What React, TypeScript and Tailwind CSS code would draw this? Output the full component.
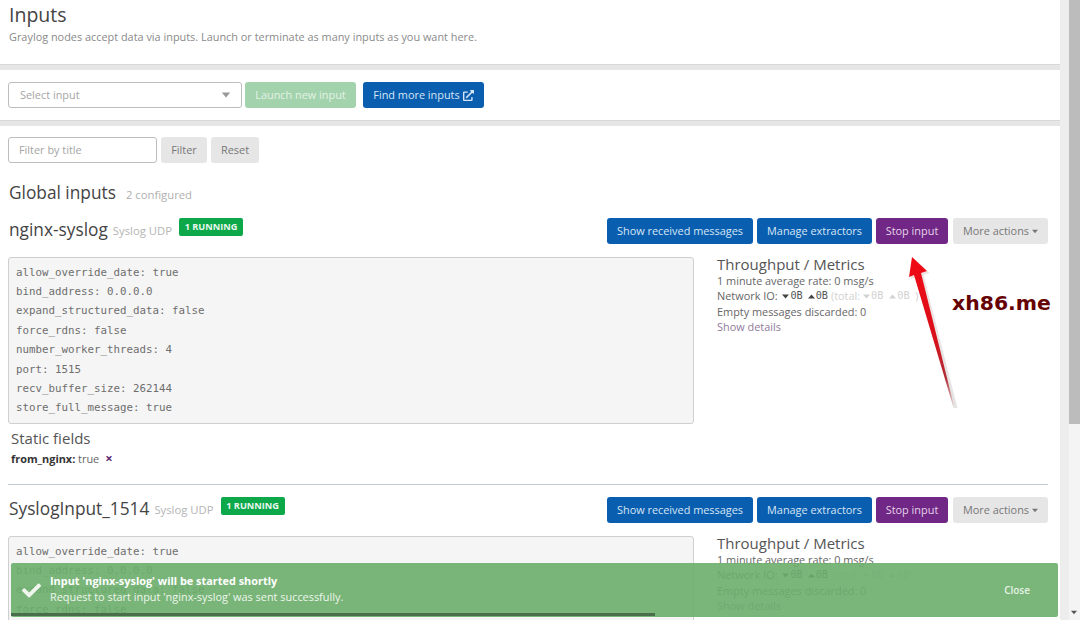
import React from "react";
import { FaCheck, FaExternalLinkAlt } from "react-icons/fa";

const sans = "font-['Open_Sans',sans-serif]";

function Caret({ up, className = "" }: { up?: boolean; className?: string }) {
  return (
    <svg width="7" height="5" viewBox="0 0 7 5" className={`inline-block ${className}`}>
      <path d={up ? "M0 4.5 L3.5 0.5 L7 4.5 Z" : "M0 0.5 L7 0.5 L3.5 4.5 Z"} fill="currentColor" />
    </svg>
  );
}

function Btn({ children, className }: { children: React.ReactNode; className: string }) {
  return (
    <div className={`h-[26px] flex items-center justify-center rounded-[3px] text-[10.9px] ${className}`}>{children}</div>
  );
}

function InputBlock({ name, running, conf, extra }: { name: string; running: number; conf: string[]; extra?: boolean }) {
  return (
    <div className="flex flex-col">
      <div className="flex items-start justify-between h-[27px]">
        <div className="flex items-start ml-[1px]">
          <span className="text-[17.3px] leading-[22px] text-[#444] mt-[1px]">{name}</span>
          <span className="text-[11.3px] leading-[22px] text-[#b5b5b5] ml-[5px] mt-[2px]">Syslog UDP</span>
          <span className="ml-[7px] h-[18px] w-[64px] flex items-center justify-center rounded-[2px] bg-[#0ca84a] text-[#e8f7ee] text-[9.2px] font-bold">
            {running} RUNNING
          </span>
        </div>
        <div className="flex gap-[4px]">
          <Btn className="w-[146px] bg-[#0a5eb0] text-[#d6e6f5]">Show received messages</Btn>
          <Btn className="w-[115px] bg-[#0a5eb0] text-[#d6e6f5]">Manage extractors</Btn>
          <Btn className="w-[72px] bg-[#702785] text-[#e6d4ea]">Stop input</Btn>
          <Btn className="w-[95px] ml-[1px] bg-[#e6e6e6] text-[#777] gap-[3px]">
            More actions <Caret className="w-[6px]" />
          </Btn>
        </div>
      </div>
      <div className="flex mt-[12px]">
        <div className="w-[686px] h-[167px] shrink-0 bg-[#f5f5f5] border border-[#cfcfcf] rounded-[3px] pt-[4.5px] pl-[7px] font-['DejaVu_Sans_Mono',monospace] text-[10.8px] leading-[19.4px] text-[#6e6e6e]">
          {conf.map((l) => (
            <div key={l}>{l}</div>
          ))}
        </div>
        <div className="ml-[23px] text-[10.9px] leading-[15.4px] text-[#666] -mt-[2px]">
          <div className="text-[15px] leading-[17px] text-[#555] mt-[1px]">Throughput / Metrics</div>
          <div>1 minute average rate: 0 msg/s</div>
          <div className="flex items-center">
            Network IO:&nbsp;
            <Caret className="text-[#444] ml-[2px] mr-[1px]" />
            <span className="font-['DejaVu_Sans_Mono',monospace] text-[10.2px] text-[#555]">0B</span>
            <Caret up className="text-[#444] ml-[5px] mr-[1px]" />
            <span className="font-['DejaVu_Sans_Mono',monospace] text-[10.2px] text-[#555]">0B</span>
            <span className="text-[#d2d2d2] ml-[3px] flex items-center">
              (total:&nbsp;
              <Caret className="mr-[1px]" />
              <span className="font-['DejaVu_Sans_Mono',monospace] text-[10.2px]">0B</span>
              <Caret up className="ml-[6px] mr-[1px]" />
              <span className="font-['DejaVu_Sans_Mono',monospace] text-[10.2px]">0B</span>&nbsp;&nbsp;)
            </span>
          </div>
          <div>Empty messages discarded: 0</div>
          <div className="text-[#8f7a9a]">Show details</div>
        </div>
      </div>
      {extra && (
        <div className="ml-[3px] mt-[5px]">
          <div className="text-[15px] leading-[18px] text-[#555]">Static fields</div>
          <div className="text-[10.9px] leading-[15px] mt-[4px] text-[#666] flex items-center">
            <b className="text-[#333] font-bold">from_nginx:</b>&nbsp;true
            <span className="ml-[6px] text-[#5b2a72] font-bold text-[13px] leading-none">×</span>
          </div>
        </div>
      )}
    </div>
  );
}

const conf1 = [
  "allow_override_date: true",
  "bind_address: 0.0.0.0",
  "expand_structured_data: false",
  "force_rdns: false",
  "number_worker_threads: 4",
  "port: 1515",
  "recv_buffer_size: 262144",
  "store_full_message: true",
];

export default function App() {
  return (
    <div className={`relative w-[1080px] h-[620px] overflow-hidden bg-[#e6e6e6] flex ${sans}`}>
      <div className="w-[1060px] shrink-0 flex flex-col gap-[5px] overflow-hidden">
        <div className="h-[65px] shrink-0 bg-white border-b border-[#d8d8d8] pl-[9px]">
          <div className="text-[19.5px] leading-[26px] text-[#444] pt-[2px]">Inputs</div>
          <div className="text-[10.9px] leading-[16px] text-[#8a8a8a] mt-[1px]">
            Graylog nodes accept data via inputs. Launch or terminate as many inputs as you want here.
          </div>
        </div>
        <div className="h-[51px] shrink-0 bg-white border-b border-[#d8d8d8] pl-[8px] pt-[12px] flex gap-[3px]">
          <div className="w-[234px] h-[26px] bg-white border border-[#bdbdbd] rounded-[3px] flex items-center justify-between pl-[11px] pr-[9px] text-[10.9px] text-[#a5a5a5]">
            Select input
            <Caret className="w-[12px] h-[6px] text-[#999]" />
          </div>
          <Btn className="w-[111px] bg-[#a3d3ad] text-[#e3f2e6]">Launch new input</Btn>
          <Btn className="w-[121px] ml-[4px] bg-[#0a5eb0] text-[#d6e6f5] gap-[3px]">
            Find more inputs <FaExternalLinkAlt className="text-[11px] text-[#d6e6f5]" />
          </Btn>
        </div>
        <div className="flex-1 bg-white pl-[8px] pr-[12px] pt-[11px]">
          <div className="flex gap-[4px]">
            <div className="w-[149px] h-[26px] border border-[#bdbdbd] rounded-[3px] flex items-center pl-[10px] text-[10.9px] text-[#a5a5a5]">
              Filter by title
            </div>
            <Btn className="w-[46px] bg-[#e6e6e6] text-[#777]">Filter</Btn>
            <Btn className="w-[48px] bg-[#e6e6e6] text-[#777]">Reset</Btn>
          </div>
          <div className="flex items-baseline mt-[18px] h-[24px] ml-[1px]">
            <span className="text-[17.3px] leading-[24px] text-[#444]">Global inputs</span>
            <span className="text-[11.3px] text-[#b0b0b0] ml-[10px]">2 configured</span>
          </div>
          <div className="mt-[13px]">
            <InputBlock name="nginx-syslog" running={1} conf={conf1} extra />
          </div>
          <div className="h-px bg-[#c3ccd6] mt-[18px] mb-[12px]" />
          <InputBlock name="SyslogInput_1514" running={1} conf={conf1} />
        </div>
      </div>
      <div className="w-[9px] shrink-0 bg-[#ededed]" />
      <div className="w-[11px] shrink-0 bg-[#f4f4f4] flex flex-col relative">
        <div className="h-[424px] bg-[#bcbcbc]" />
        <Caret className="absolute bottom-[5px] left-[2px] w-[6px] text-[#555]" />
      </div>

      <div className="absolute left-[11px] top-[563px] w-[1047px] h-[54px] rounded-[2px] bg-[#6cae6c]/90 flex items-center text-white">
        <FaCheck className="ml-[11px] text-[19px] text-[#f0f6ee]" />
        <div className="ml-[9px] text-[10.9px] leading-[16px] -mt-[2px]">
          <div className="font-bold">Input 'nginx-syslog' will be started shortly</div>
          <div className="text-[#eef6ec]">Request to start input 'nginx-syslog' was sent successfully.</div>
        </div>
        <div className="ml-auto mr-[28px] font-semibold text-[10px] text-[#e6f2e4]">Close</div>
        <div className="absolute left-0 bottom-[1px] w-[644px] h-[3px] bg-[#4a6d4b]" />
      </div>

      <div className="absolute left-[952px] top-[290px] font-['DejaVu_Sans',sans-serif] font-bold text-[20px] leading-[26px] text-[#660202] whitespace-nowrap scale-x-[1.02] origin-left">
        xh86.me
      </div>
      <svg className="absolute left-[900px] top-[250px]" width="62" height="165" viewBox="0 0 62 165">
        <defs>
          <linearGradient id="arrowFill" x1="0" y1="0" x2="0" y2="1">
            <stop offset="0" stopColor="#f20a14" />
            <stop offset="0.55" stopColor="#d8101a" />
            <stop offset="0.82" stopColor="#b03038" />
            <stop offset="1" stopColor="#e8d8d8" />
          </linearGradient>
          <linearGradient id="arrowShadow" x1="0" y1="0" x2="0" y2="1">
            <stop offset="0" stopColor="#c8a0a0" />
            <stop offset="1" stopColor="#a8a8a8" />
          </linearGradient>
        </defs>
        <path d="M12 7 L28 22 L22 24 L56 157 L52 157 L15 26 L9 28 Z" fill="url(#arrowShadow)" opacity="0.3" transform="translate(1.5 1)" />
        <path d="M12 7 L27 21 L21 23 L54 156 L53 156 L14 25 L9 27 Z" fill="url(#arrowFill)" />
      </svg>
    </div>
  );
}
